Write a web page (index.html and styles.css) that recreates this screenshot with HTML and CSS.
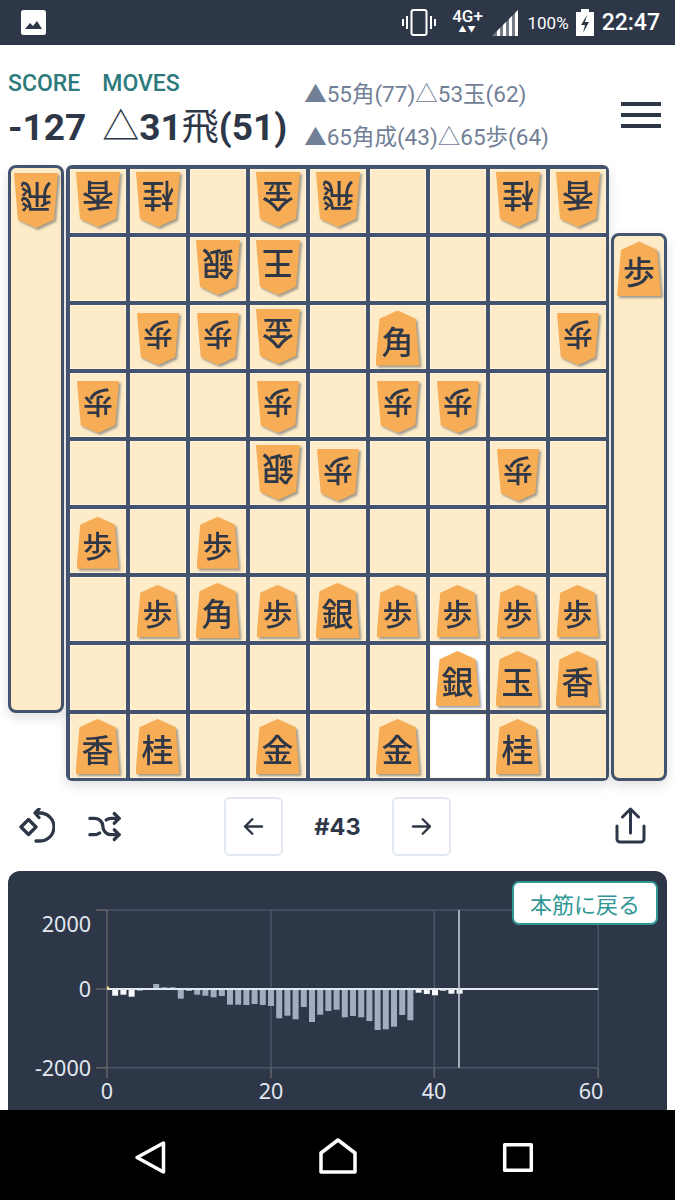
FILE: index.html
```html
<!doctype html>
<html>
<head>
    <title>Shogi Review</title>
    <meta charset="utf-8" />
    <meta name="viewport" content="width=device-width, initial-scale=1" />
    <link rel="stylesheet" href="styles.css">
</head>

<body>
<div class="phone">
	<div class="statusbar">
		<svg class="st-image" width="25" height="25" viewBox="0 0 25 25"><rect x="0" y="0" width="25" height="25" rx="2.5" fill="#fff"/><path d="M4 19l5-6 3 3 4-5 5 8z" fill="#2d3748"/></svg>
		<div class="st-right">
			<svg class="st-vib" width="34" height="27" viewBox="0 0 34 27"><rect x="9.5" y="1" width="15" height="25" rx="2" fill="none" stroke="#fff" stroke-width="2"/><path d="M5 7v13M1 10v7M29 7v13M33 10v7" stroke="#fff" stroke-width="2"/></svg>
			<div class="st-net"><span class="st-4g">4G+</span><span class="st-arrows">▲▼</span></div>
			<svg class="st-sig" width="26" height="26" viewBox="0 0 26 26"><path d="M26 0v26H0z" fill="#fff" opacity=".35"/><path d="M26 0v26h-3V3zM20 6v20h-3V9zM14 12v14h-3V15zM8 18v8H5v-5z" fill="#fff"/></svg>
			<span class="st-pct">100%</span>
			<svg class="st-bat" width="18" height="27" viewBox="0 0 18 27"><path d="M5 0h8v3h5v24H0V3h5z" fill="#fff"/><path d="M11 6L5 16h4l-2 8 6-11H9z" fill="#2d3748"/></svg>
			<span class="st-time">22:47</span>
		</div>
	</div>

	<div class="main">
		<div class="head">
			<div class="stat">
				<div class="stat-label">SCORE</div>
				<div class="stat-value">-127</div>
			</div>
			<div class="stat">
				<div class="stat-label">MOVES</div>
				<div class="stat-value"><span class="thin">△</span>31<span class="thin">飛</span>(51)</div>
			</div>
			<div class="next-moves">
				<div>▲55角(77)△53玉(62)</div>
				<div>▲65角成(43)△65歩(64)</div>
			</div>
			<div class="menu"><span></span><span></span><span></span></div>
		</div>

		<div class="game">
			<div class="hand hand-top">
				<div class="piece gote"><div class="koma">飛</div></div>
			</div>
			<div class="board">
				<div class="cell"><div class="piece gote"><div class="koma">香</div></div></div>
				<div class="cell"><div class="piece gote"><div class="koma">桂</div></div></div>
				<div class="cell"></div>
				<div class="cell"><div class="piece gote"><div class="koma">金</div></div></div>
				<div class="cell"><div class="piece gote"><div class="koma">飛</div></div></div>
				<div class="cell"></div>
				<div class="cell"></div>
				<div class="cell"><div class="piece gote"><div class="koma">桂</div></div></div>
				<div class="cell"><div class="piece gote"><div class="koma">香</div></div></div>

				<div class="cell"></div>
				<div class="cell"></div>
				<div class="cell"><div class="piece gote"><div class="koma">銀</div></div></div>
				<div class="cell"><div class="piece gote"><div class="koma">王</div></div></div>
				<div class="cell"></div>
				<div class="cell"></div>
				<div class="cell"></div>
				<div class="cell"></div>
				<div class="cell"></div>

				<div class="cell"></div>
				<div class="cell"><div class="piece gote fu"><div class="koma">歩</div></div></div>
				<div class="cell"><div class="piece gote fu"><div class="koma">歩</div></div></div>
				<div class="cell"><div class="piece gote"><div class="koma">金</div></div></div>
				<div class="cell"></div>
				<div class="cell"><div class="piece sente"><div class="koma">角</div></div></div>
				<div class="cell"></div>
				<div class="cell"></div>
				<div class="cell"><div class="piece gote fu"><div class="koma">歩</div></div></div>

				<div class="cell"><div class="piece gote fu"><div class="koma">歩</div></div></div>
				<div class="cell"></div>
				<div class="cell"></div>
				<div class="cell"><div class="piece gote fu"><div class="koma">歩</div></div></div>
				<div class="cell"></div>
				<div class="cell"><div class="piece gote fu"><div class="koma">歩</div></div></div>
				<div class="cell"><div class="piece gote fu"><div class="koma">歩</div></div></div>
				<div class="cell"></div>
				<div class="cell"></div>

				<div class="cell"></div>
				<div class="cell"></div>
				<div class="cell"></div>
				<div class="cell"><div class="piece gote"><div class="koma">銀</div></div></div>
				<div class="cell"><div class="piece gote fu"><div class="koma">歩</div></div></div>
				<div class="cell"></div>
				<div class="cell"></div>
				<div class="cell"><div class="piece gote fu"><div class="koma">歩</div></div></div>
				<div class="cell"></div>

				<div class="cell"><div class="piece sente fu"><div class="koma">歩</div></div></div>
				<div class="cell"></div>
				<div class="cell"><div class="piece sente fu"><div class="koma">歩</div></div></div>
				<div class="cell"></div>
				<div class="cell"></div>
				<div class="cell"></div>
				<div class="cell"></div>
				<div class="cell"></div>
				<div class="cell"></div>

				<div class="cell"></div>
				<div class="cell"><div class="piece sente fu"><div class="koma">歩</div></div></div>
				<div class="cell"><div class="piece sente"><div class="koma">角</div></div></div>
				<div class="cell"><div class="piece sente fu"><div class="koma">歩</div></div></div>
				<div class="cell"><div class="piece sente"><div class="koma">銀</div></div></div>
				<div class="cell"><div class="piece sente fu"><div class="koma">歩</div></div></div>
				<div class="cell"><div class="piece sente fu"><div class="koma">歩</div></div></div>
				<div class="cell"><div class="piece sente fu"><div class="koma">歩</div></div></div>
				<div class="cell"><div class="piece sente fu"><div class="koma">歩</div></div></div>

				<div class="cell"></div>
				<div class="cell"></div>
				<div class="cell"></div>
				<div class="cell"></div>
				<div class="cell"></div>
				<div class="cell"></div>
				<div class="cell lit"><div class="piece sente"><div class="koma">銀</div></div></div>
				<div class="cell"><div class="piece sente"><div class="koma">玉</div></div></div>
				<div class="cell"><div class="piece sente"><div class="koma">香</div></div></div>

				<div class="cell"><div class="piece sente"><div class="koma">香</div></div></div>
				<div class="cell"><div class="piece sente"><div class="koma">桂</div></div></div>
				<div class="cell"></div>
				<div class="cell"><div class="piece sente"><div class="koma">金</div></div></div>
				<div class="cell"></div>
				<div class="cell"><div class="piece sente"><div class="koma">金</div></div></div>
				<div class="cell lit"></div>
				<div class="cell"><div class="piece sente"><div class="koma">桂</div></div></div>
				<div class="cell"></div>
			</div>
			<div class="hand hand-bottom">
				<div class="piece sente"><div class="koma">歩</div></div>
			</div>
		</div>

		<div class="controls">
			<div class="ctl-left">
				<svg width="36" height="36" viewBox="0 0 36 36" fill="none" stroke="#2d3748" stroke-width="3.3" stroke-linecap="round" stroke-linejoin="round"><path d="M9.5 11.5l7.5 7.5-7.5 7.5L2 19z"/><path d="M17 5h4a13.5 13.5 0 0 1 0 28h-4"/><path d="M20 1l-4 4 4 4.500"/></svg>
				<svg width="39" height="39" viewBox="0 0 24 24" fill="none" stroke="#2d3748" stroke-width="2" stroke-linecap="round" stroke-linejoin="round"><path d="M18 4l3 3l-3 3"/><path d="M18 20l3-3l-3-3"/><path d="M3 7h3a5 5 0 0 1 5 5a5 5 0 0 0 5 5h5"/><path d="M21 7h-5a5 5 0 0 0-3 1m-4 8a5 5 0 0 1-3 1h-3"/></svg>
			</div>
			<div class="ctl-mid">
				<div class="nav-btn"><svg width="29" height="29" viewBox="0 0 24 24" fill="none" stroke="#2d3748" stroke-width="2" stroke-linecap="round" stroke-linejoin="round"><path d="M5 12h14M5 12l6 6M5 12l6-6"/></svg></div>
				<div class="move-no">#43</div>
				<div class="nav-btn"><svg width="29" height="29" viewBox="0 0 24 24" fill="none" stroke="#2d3748" stroke-width="2" stroke-linecap="round" stroke-linejoin="round"><path d="M5 12h14M19 12l-6 6M19 12l-6-6"/></svg></div>
			</div>
			<div class="ctl-right">
				<svg width="31" height="38" viewBox="0 0 31 38" fill="none" stroke="#2d3748" stroke-width="3" stroke-linecap="round" stroke-linejoin="round"><path d="M2 19v13a3 3 0 0 0 3 3h21a3 3 0 0 0 3-3V19"/><path d="M15.500 26V2M7.500 10l8-8 8 8"/></svg>
			</div>
		</div>

		<div class="chart-panel">
			<button class="back-btn">本筋に戻る</button>
			<svg class="chart" width="659" height="260" viewBox="8 871 659 260">
				<g class="grid">
					<path d="M107 910H598.300M107 1067.700H598.300M271 910V1067.700M434.300 910V1067.700M598.300 910V1067.700"/>
				</g>
				<g class="ticks">
					<path d="M96 910H107M96 989H107M96 1067.700H107M107 910V1078M271 1067.700V1078M434.300 1067.700V1078M598.300 1067.700V1078"/>
				</g>
				<g class="bars">
					<rect x="136.800" y="989" width="6" height="1.700"/>
					<rect x="145" y="989" width="6" height="0.700"/>
					<rect x="153.200" y="984" width="6" height="5"/>
					<rect x="161.400" y="987.300" width="6" height="1.700"/>
					<rect x="169.600" y="987.300" width="6" height="1.700"/>
					<rect x="177.800" y="989" width="6" height="9.700"/>
					<rect x="186" y="989" width="6" height="2"/>
					<rect x="194.200" y="989" width="6" height="5.700"/>
					<rect x="202.400" y="989" width="6" height="6.700"/>
					<rect x="210.600" y="989" width="6" height="8.300"/>
					<rect x="218.800" y="989" width="6" height="7"/>
					<rect x="227" y="989" width="6" height="15.700"/>
					<rect x="235.200" y="989" width="6" height="15.700"/>
					<rect x="243.400" y="989" width="6" height="16"/>
					<rect x="251.600" y="989" width="6" height="15"/>
					<rect x="259.800" y="989" width="6" height="16"/>
					<rect x="268" y="989" width="6" height="17"/>
					<rect x="276.200" y="989" width="6" height="29.300"/>
					<rect x="284.400" y="989" width="6" height="26.700"/>
					<rect x="292.600" y="989" width="6" height="30.300"/>
					<rect x="300.800" y="989" width="6" height="18"/>
					<rect x="309" y="989" width="6" height="33"/>
					<rect x="317.200" y="989" width="6" height="25.700"/>
					<rect x="325.400" y="989" width="6" height="22"/>
					<rect x="333.600" y="989" width="6" height="20.700"/>
					<rect x="341.800" y="989" width="6" height="28.300"/>
					<rect x="350" y="989" width="6" height="27"/>
					<rect x="358.200" y="989" width="6" height="28.300"/>
					<rect x="366.400" y="989" width="6" height="32"/>
					<rect x="374.600" y="989" width="6" height="41"/>
					<rect x="382.800" y="989" width="6" height="40.300"/>
					<rect x="391" y="989" width="6" height="37.700"/>
					<rect x="399.200" y="989" width="6" height="26"/>
					<rect x="407.400" y="989" width="6" height="31.300"/>
				</g>
				<g class="bars-white">
					<rect x="112.200" y="989" width="6" height="6.700"/>
					<rect x="120.400" y="989" width="6" height="5.700"/>
					<rect x="128.600" y="989" width="6" height="7.700"/>
					<rect x="415.600" y="989" width="6" height="3.700"/>
					<rect x="423.800" y="989" width="6" height="5"/>
					<rect x="432" y="989" width="6" height="6.300"/>
					<rect x="440.200" y="989" width="6" height="1.700"/>
					<rect x="448.400" y="989" width="6" height="4.700"/>
					<rect x="456.600" y="989" width="6" height="4.700"/>
				</g>
				<path class="zero" d="M107 989H598.300"/>
				<path class="cursor" d="M459 910V1067.700"/>
				<rect x="107" y="986.500" width="2" height="2" fill="#f6e05e"/>
				<g class="labels-y">
					<text x="91" y="932">2000</text>
					<text x="91" y="997">0</text>
					<text x="91" y="1076">-2000</text>
				</g>
				<g class="labels-x">
					<text x="107" y="1099">0</text>
					<text x="271" y="1099">20</text>
					<text x="434" y="1099">40</text>
					<text x="591" y="1099">60</text>
				</g>
			</svg>
		</div>
	</div>

	<div class="navbar">
		<svg width="36" height="40" viewBox="0 0 36 40" fill="none" stroke="#fff" stroke-width="3.500" stroke-linejoin="round"><path d="M31.500 8v29L5 22.500z"/></svg>
		<svg class="nav-home" width="40" height="40" viewBox="0 0 40 40" fill="none" stroke="#fff" stroke-width="3.500" stroke-linejoin="round"><path d="M3 18L20 5l17 13v19H3z"/></svg>
		<svg class="nav-square" width="34" height="34" viewBox="0 0 34 34" fill="none" stroke="#fff" stroke-width="3.500" stroke-linejoin="round"><rect x="3.700" y="6.700" width="26.600" height="25.600"/></svg>
	</div>
</div>
</body>
</html>
```

FILE: styles.css
```css
* {
	box-sizing: border-box;
}
body {
	margin: 0;
	background-color: #fff;
	color: #2d3748;
	font-family: Roboto, "Noto Sans CJK JP", sans-serif;
}
.phone {
	width: 675px;
	height: 1200px;
	display: flex;
	flex-direction: column;
	overflow: hidden;
}

/* android status bar */
.statusbar {
	height: 45px;
	flex: none;
	background-color: #2d3748;
	color: #fff;
	display: flex;
	align-items: center;
	justify-content: space-between;
	padding: 0 15px 0 21px;
}
.st-right {
	display: flex;
	align-items: center;
}
.st-net {
	display: flex;
	flex-direction: column;
	align-items: center;
	width: 32px;
	margin: -2px 8px 0 16px;
}
.st-4g {
	font-size: 17px;
	line-height: 17px;
	font-weight: 500;
}
.st-arrows {
	font-size: 8px;
	line-height: 10px;
	letter-spacing: 1px;
}
.st-pct {
	font-size: 17px;
	margin: 0 7px 0 10px;
}
.st-time {
	font-size: 23px;
	font-weight: 500;
	margin-left: 8px;
}

.main {
	flex: 1;
	min-height: 0;
	overflow: hidden;
}

/* header */
.head {
	height: 120.3px;
	display: flex;
	padding: 26px 14px 0 8px;
}
.stat {
	margin-right: 16px;
}
.stat-label {
	font-size: 23px;
	line-height: 26px;
	font-weight: 500;
	color: #2c7a7b;
}
.stat-value {
	font-size: 37px;
	line-height: 50px;
	margin-top: 6px;
	font-weight: 700;
	white-space: nowrap;
}
.thin {
	font-weight: 400;
}
.next-moves {
	color: #718096;
	font-size: 22.5px;
	line-height: 43px;
	margin-top: 2px;
	margin-left: 1px;
	white-space: nowrap;
}
.menu {
	margin-left: auto;
	padding-top: 31px;
	display: flex;
	flex-direction: column;
	gap: 7px;
}
.menu span {
	display: block;
	width: 40px;
	height: 4px;
	background-color: #2d3748;
}

/* board */
.game {
	display: flex;
	gap: 2px;
	padding-left: 8px;
}
.board {
	display: grid;
	grid-template-columns: repeat(9, 56px);
	grid-template-rows: repeat(9, 64.1px);
	gap: 4px;
	padding: 3.5px;
	background-color: #44546e;
	border-radius: 6px;
	box-shadow: 0 5px 12px rgba(0, 0, 0, .12);
}
.cell {
	background-color: #feebc8;
	box-shadow: inset 0 0 0 1px #fff4da;
	display: flex;
	align-items: center;
	justify-content: center;
}
.cell.lit {
	background-color: #fff;
}
.hand {
	width: 56px;
	height: 548px;
	border: 3px solid #44546e;
	border-radius: 8px;
	background-color: #feebc8;
	box-shadow: 0 5px 12px rgba(0, 0, 0, .12);
	display: flex;
	justify-content: center;
	padding-top: 5px;
}
.hand-bottom {
	margin-top: 68.1px;
}

/* pieces */
.piece {
	width: 44px;
	height: 55px;
	flex: none;
	filter: drop-shadow(2px 2px 1px rgba(45, 55, 72, .45));
}
.piece.fu {
	width: 42px;
	height: 52px;
}
.cell .sente {
	margin-top: 2px;
}
.cell .gote {
	margin-bottom: 2px;
}
.cell .fu {
	margin-top: 3px;
	margin-bottom: 0;
}
.koma {
	width: 100%;
	height: 100%;
	background-color: #f6ad55;
	clip-path: polygon(50% 0, 91% 15%, 100% 100%, 0 100%, 9% 15%);
	font-family: "Noto Sans CJK JP", sans-serif;
	font-size: 32px;
	font-weight: 500;
	line-height: 1;
	color: #2d3748;
	display: flex;
	align-items: center;
	justify-content: center;
	padding-top: 3px;
}
.fu .koma {
	font-size: 30px;
}
.gote .koma {
	transform: rotate(180deg);
}

/* buttons below the board */
.controls {
	height: 89.7px;
	display: grid;
	grid-template-columns: 1fr auto 1fr;
	align-items: center;
}
.ctl-left {
	display: flex;
	align-items: center;
	gap: 30px;
	padding-left: 19px;
}
.ctl-mid {
	display: flex;
	align-items: center;
}
.ctl-right {
	display: flex;
	justify-content: flex-end;
	padding-right: 29px;
}
.nav-btn {
	width: 59px;
	height: 59px;
	border: 2px solid #e2e8f0;
	border-radius: 6px;
	display: flex;
	align-items: center;
	justify-content: center;
}
.move-no {
	width: 109px;
	text-align: center;
	font-family: Inter, sans-serif;
	font-size: 23.5px;
	font-weight: 700;
}

/* score chart */
.chart-panel {
	position: relative;
	margin: 0 8px;
	height: 260px;
	background-color: #2d3748;
	border-radius: 12px 12px 0 0;
}
.chart {
	display: block;
}
.back-btn {
	position: absolute;
	top: 10px;
	right: 9px;
	width: 146px;
	height: 44px;
	padding: 0;
	background-color: #fff;
	border: 2px solid #319795;
	border-radius: 7px;
	color: #319795;
	font-family: "Noto Sans CJK JP", sans-serif;
	font-size: 22px;
}
.grid path {
	fill: none;
	stroke: #4a5568;
	stroke-width: 1.5;
}
.ticks path {
	fill: none;
	stroke: #666;
	stroke-width: 1.5;
}
.bars rect {
	fill: #a0aec0;
}
.bars-white rect {
	fill: #f7fafc;
}
.zero {
	stroke: #e2e8f0;
	stroke-width: 2;
}
.cursor {
	stroke: #cbd5e0;
	stroke-width: 1.5;
}
.chart text {
	fill: #e2e8f0;
	font-family: "Noto Sans", sans-serif;
	font-size: 21.5px;
}
.labels-y text {
	text-anchor: end;
}
.labels-x text {
	text-anchor: middle;
}

/* android nav bar */
.navbar {
	height: 90px;
	flex: none;
	background-color: #000;
	display: flex;
	align-items: center;
	padding-left: 132px;
}
.nav-home {
	margin-left: 150px;
}
.nav-square {
	margin-left: 143px;
}
```
